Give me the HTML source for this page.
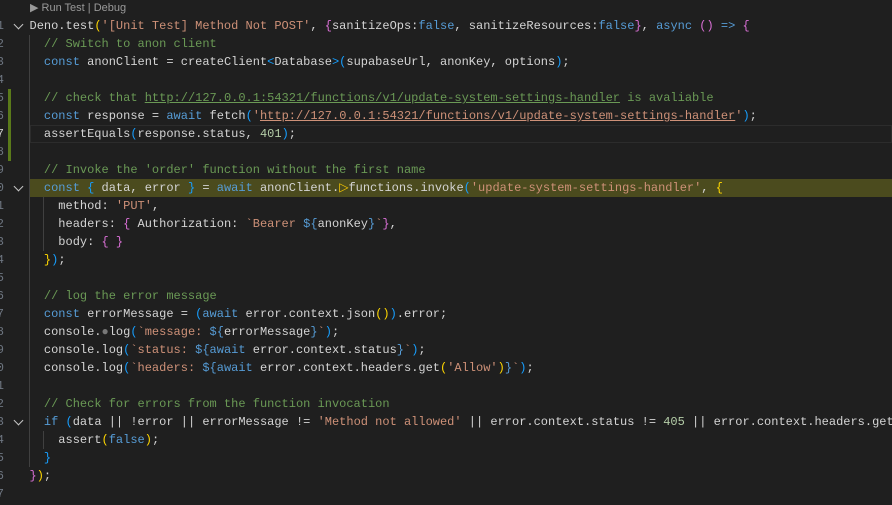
<!DOCTYPE html>
<html><head><meta charset="utf-8"><style>
html,body{margin:0;padding:0;background:#1f1f1f;width:892px;height:505px;overflow:hidden}
body{position:relative;font-family:"Liberation Mono",monospace;font-size:12px;color:#d4d4d4}
.l{position:absolute;left:29.5px;height:18px;line-height:18px;white-space:pre}
.n{position:absolute;right:888px;width:20px;text-align:right;height:18px;line-height:18px;color:#6e7681;font-size:12px}
.f{position:absolute;left:15px;width:6px;height:6px;border-right:1.2px solid #c5c5c5;border-bottom:1.2px solid #c5c5c5;transform:rotate(45deg)}
.k{color:#569cd6}.s{color:#ce9178}.c{color:#6a9955}.nu{color:#b5cea8}
.y{color:#ffd700}.p{color:#da70d6}.b{color:#179fff}
.u{text-decoration:underline}
.g{position:absolute;width:1px;background:#404040}
</style></head><body>
<div style="position:absolute;left:30px;top:1px;font-family:'Liberation Sans',sans-serif;font-size:11px;color:#999">&#9654; Run Test | Debug</div>
<div style="position:absolute;left:29px;right:0;top:179px;height:18px;background:#4b4b1e"></div>
<div style="position:absolute;left:30px;right:0;top:125px;height:18px;border:1px solid #2c2c2c;box-sizing:border-box"></div>
<div style="position:absolute;left:8px;top:89px;width:3px;height:72px;background:#5a7a1a"></div>
<div class="g" style="left:29px;top:35px;height:432px"></div>
<div class="g" style="left:43px;top:197px;height:54px"></div>
<div class="g" style="left:43px;top:431px;height:18px"></div>
<div class="f" style="top:21px"></div>
<div class="f" style="top:183px"></div>
<div class="f" style="top:417px"></div>

<div class="n" style="top:17px">1</div><div class="n" style="top:35px">2</div><div class="n" style="top:53px">3</div><div class="n" style="top:71px">4</div><div class="n" style="top:89px">5</div><div class="n" style="top:107px">6</div><div class="n" style="top:125px;color:#ccc">7</div><div class="n" style="top:143px">8</div><div class="n" style="top:161px">9</div><div class="n" style="top:179px">0</div><div class="n" style="top:197px">1</div><div class="n" style="top:215px">2</div><div class="n" style="top:233px">3</div><div class="n" style="top:251px">4</div><div class="n" style="top:269px">5</div><div class="n" style="top:287px">6</div><div class="n" style="top:305px">7</div><div class="n" style="top:323px">8</div><div class="n" style="top:341px">9</div><div class="n" style="top:359px">0</div><div class="n" style="top:377px">1</div><div class="n" style="top:395px">2</div><div class="n" style="top:413px">3</div><div class="n" style="top:431px">4</div><div class="n" style="top:449px">5</div><div class="n" style="top:467px">6</div><div class="n" style="top:485px">7</div>

<div class="l" style="top:17px">Deno.test<span class="y">(</span><span class="s">'[Unit Test] Method Not POST'</span>, <span class="p">{</span>sanitizeOps:<span class="k">false</span>, sanitizeResources:<span class="k">false</span><span class="p">}</span>, <span class="k">async</span> <span class="p">()</span> <span class="k">=&gt;</span> <span class="p">{</span></div>
<div class="l" style="top:35px">  <span class="c">// Switch to anon client</span></div>
<div class="l" style="top:53px">  <span class="k">const</span> anonClient = createClient<span class="b">&lt;</span>Database<span class="b">&gt;(</span>supabaseUrl, anonKey, options<span class="b">)</span>;</div>
<div class="l" style="top:89px">  <span class="c">// check that <span class="u">http://127.0.0.1:54321/functions/v1/update-system-settings-handler</span> is avaliable</span></div>
<div class="l" style="top:107px">  <span class="k">const</span> response = <span class="k">await</span> fetch<span class="b">(</span><span class="s">'<span class="u">http://127.0.0.1:54321/functions/v1/update-system-settings-handler</span>'</span><span class="b">)</span>;</div>
<div class="l" style="top:125px">  assertEquals<span class="b">(</span>response.status, <span class="nu">401</span><span class="b">)</span>;</div>
<div class="l" style="top:161px">  <span class="c">// Invoke the 'order' function without the first name</span></div>
<div class="l" style="top:179px">  <span class="k">const</span> <span class="b">{</span> data, error <span class="b">}</span> = <span class="k">await</span> anonClient.<span style="color:#ffcc00">&#9655;</span>functions.invoke<span class="b">(</span><span class="s">'update-system-settings-handler'</span>, <span class="y">{</span></div>
<div class="l" style="top:197px">    method: <span class="s">'PUT'</span>,</div>
<div class="l" style="top:215px">    headers: <span class="p">{</span> Authorization: <span class="s">`Bearer </span><span class="k">${</span>anonKey<span class="k">}</span><span class="s">`</span><span class="p">}</span>,</div>
<div class="l" style="top:233px">    body: <span class="p">{ }</span></div>
<div class="l" style="top:251px">  <span class="y">}</span><span class="b">)</span>;</div>
<div class="l" style="top:287px">  <span class="c">// log the error message</span></div>
<div class="l" style="top:305px">  <span class="k">const</span> errorMessage = <span class="b">(</span><span class="k">await</span> error.context.json<span class="y">()</span><span class="b">)</span>.error;</div>
<div class="l" style="top:323px">  console.<span style="color:#777">&#9679;</span>log<span class="b">(</span><span class="s">`message: </span><span class="k">${</span>errorMessage<span class="k">}</span><span class="s">`</span><span class="b">)</span>;</div>
<div class="l" style="top:341px">  console.log<span class="b">(</span><span class="s">`status: </span><span class="k">${await</span> error.context.status<span class="k">}</span><span class="s">`</span><span class="b">)</span>;</div>
<div class="l" style="top:359px">  console.log<span class="b">(</span><span class="s">`headers: </span><span class="k">${await</span> error.context.headers.get<span class="y">(</span><span class="s">'Allow'</span><span class="y">)</span><span class="k">}</span><span class="s">`</span><span class="b">)</span>;</div>
<div class="l" style="top:395px">  <span class="c">// Check for errors from the function invocation</span></div>
<div class="l" style="top:413px">  <span class="k">if</span> <span class="b">(</span>data || !error || errorMessage != <span class="s">'Method not allowed'</span> || error.context.status != <span class="nu">405</span> || error.context.headers.get</div>
<div class="l" style="top:431px">    assert<span class="y">(</span><span class="k">false</span><span class="y">)</span>;</div>
<div class="l" style="top:449px">  <span class="b">}</span></div>
<div class="l" style="top:467px"><span class="p">}</span><span class="y">)</span>;</div>
</body></html>
